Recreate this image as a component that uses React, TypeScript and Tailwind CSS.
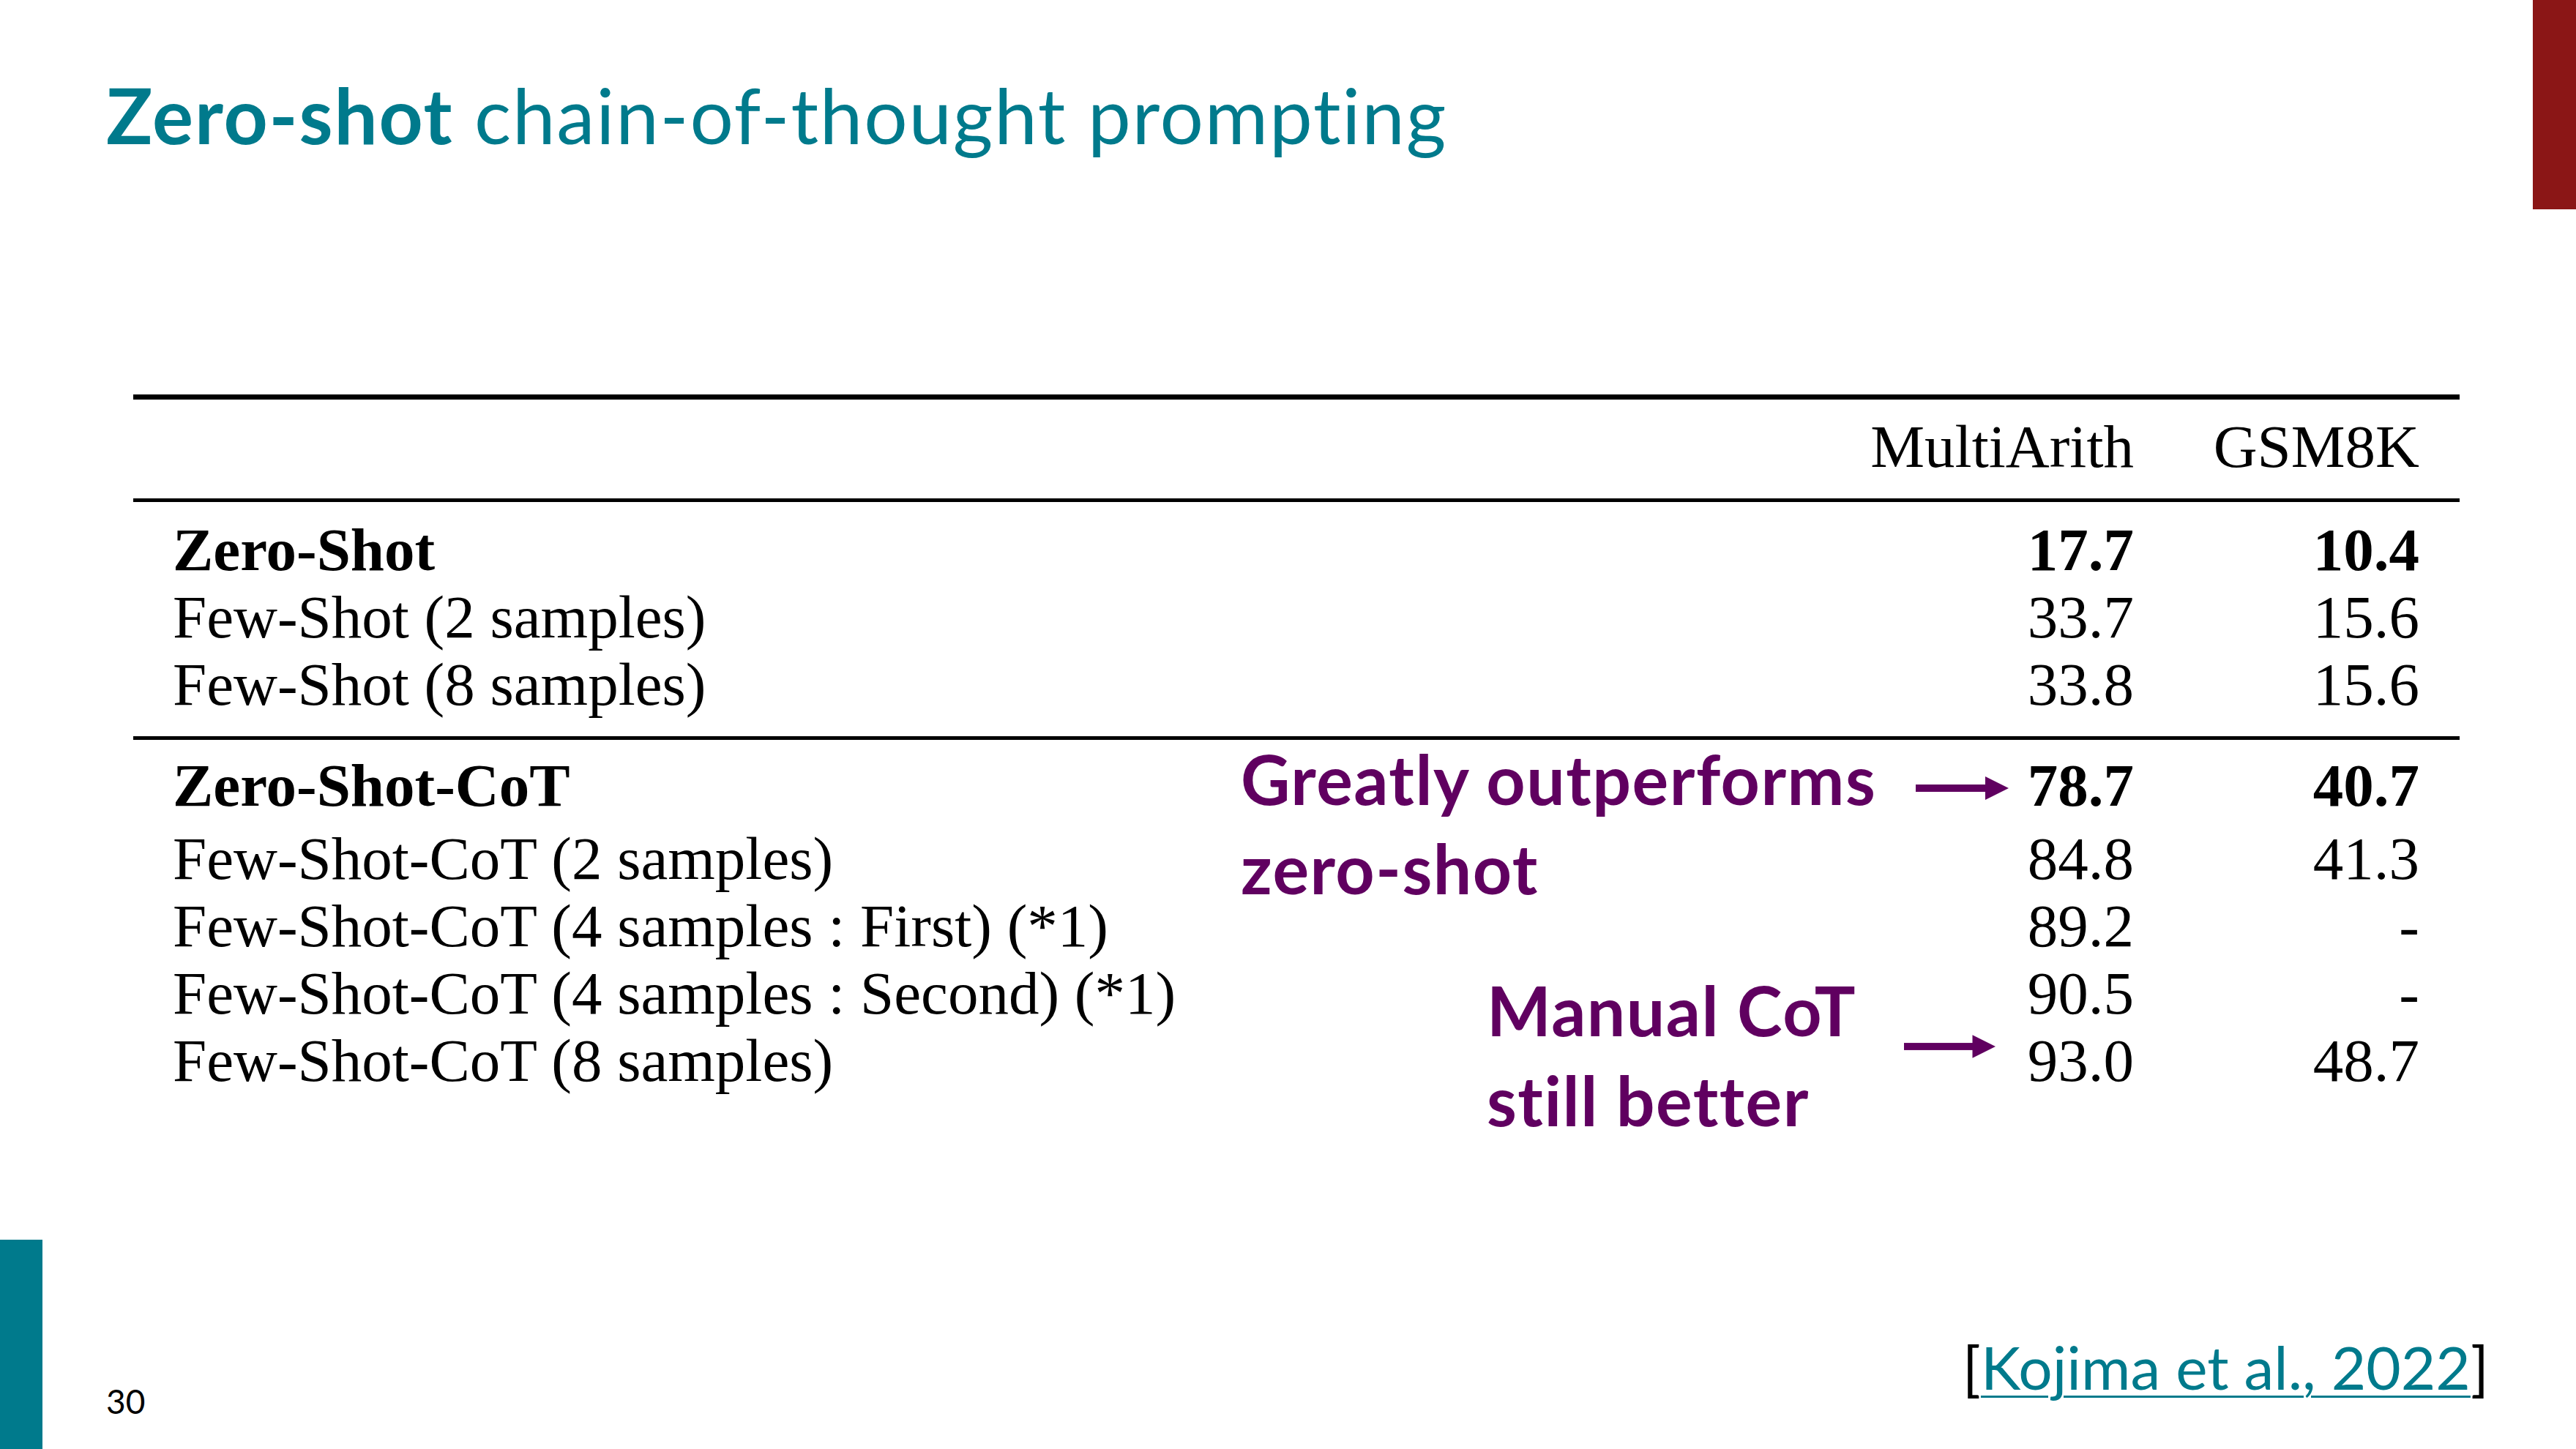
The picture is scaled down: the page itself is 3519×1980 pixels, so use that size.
import React from 'react';

type Row = { label: string; a: string; b: string; bold?: boolean };

const baseRows: Row[] = [
  { label: 'Zero-Shot', a: '17.7', b: '10.4', bold: true },
  { label: 'Few-Shot (2 samples)', a: '33.7', b: '15.6' },
  { label: 'Few-Shot (8 samples)', a: '33.8', b: '15.6' },
];

const cotRows: Row[] = [
  { label: 'Zero-Shot-CoT', a: '78.7', b: '40.7', bold: true },
  { label: 'Few-Shot-CoT (2 samples)', a: '84.8', b: '41.3' },
  { label: 'Few-Shot-CoT (4 samples : First) (*1)', a: '89.2', b: '-' },
  { label: 'Few-Shot-CoT (4 samples : Second) (*1)', a: '90.5', b: '-' },
  { label: 'Few-Shot-CoT (8 samples)', a: '93.0', b: '48.7' },
];

function TableRow({ row, extra = '' }: { row: Row; extra?: string }) {
  const weight = row.bold ? 'font-bold' : 'font-normal';
  return (
    <div className={`flex h-[92px] leading-[92px] pr-[55px] ${extra}`}>
      <div className={`flex-1 pl-[54px] ${weight}`}>{row.label}</div>
      <div className={`w-[400px] text-right ${weight}`}>{row.a}</div>
      <div className={`w-[390px] text-right ${weight}`}>{row.b}</div>
    </div>
  );
}

function Arrow({ className }: { className: string }) {
  return (
    <svg viewBox="0 0 127 32" className={className}>
      <rect x="0" y="11" width="96" height="10" fill="#600060" />
      <polygon points="95,0 127,16 95,32" fill="#600060" />
    </svg>
  );
}

export default function App() {
  return (
    <div className="w-[3519px] h-[1980px] bg-white flex flex-col overflow-hidden [font-variant-ligatures:none]">
      {/* title + red corner bar */}
      <div className="flex h-[286px] shrink-0">
        <h1 className="flex-1 pl-[145px] pt-[104px] font-['Lato',sans-serif] text-[105px] tracking-[0.017em] leading-none text-[#007a8c] font-normal">
          <span className="font-bold">Zero-shot</span> chain-of-thought prompting
        </h1>
        <div className="w-[59px] h-[286px] bg-[#8b1616]" />
      </div>

      {/* results table */}
      <div className="relative ml-[182px] mt-[253px] w-[3178px] font-['Liberation_Serif',serif] text-[83px] text-black">
        <div className="h-[7px] bg-black" />
        <div className="flex h-[135px] pt-[18px] leading-[92px] pr-[55px]">
          <div className="flex-1" />
          <div className="w-[400px] text-right">MultiArith</div>
          <div className="w-[390px] text-right">GSM8K</div>
        </div>
        <div className="h-[5px] bg-black" />
        <div className="pt-[19px] pb-[25px]">
          {baseRows.map((r) => (
            <TableRow key={r.label} row={r} />
          ))}
        </div>
        <div className="h-[5px] bg-black" />
        <div className="pt-[16px]">
          {cotRows.map((r, i) => (
            <TableRow key={r.label} row={r} extra={i === 0 ? 'mb-[8px]' : ''} />
          ))}
        </div>

        {/* callouts */}
        <div className="absolute left-[1513px] top-[464px] font-['Lato',sans-serif] font-bold text-[93px] tracking-[0.016em] leading-[122px] text-[#600060]">
          Greatly outperforms
          <br />
          zero-shot
        </div>
        <Arrow className="absolute left-[2435px] top-[522px] w-[127px] h-[32px]" />
        <div className="absolute left-[1849px] top-[780px] font-['Lato',sans-serif] font-bold text-[93px] tracking-[0.016em] leading-[123px] text-[#600060]">
          Manual CoT
          <br />
          still better
        </div>
        <Arrow className="absolute left-[2419px] top-[875px] w-[125px] h-[32px]" />
      </div>

      {/* footer */}
      <div className="mt-auto flex items-end">
        <div className="w-[58px] h-[286px] bg-[#007a8c] shrink-0" />
        <div className="ml-[87px] mb-[42px] font-['Lato',sans-serif] text-[46px] leading-none text-black">30</div>
        <div className="ml-auto mr-[119px] mb-[72px] font-['Lato',sans-serif] text-[82px] leading-none text-black">
          [<span className="text-[#007a8c] underline decoration-[3px] underline-offset-[8px]">Kojima et al., 2022</span>]
        </div>
      </div>
    </div>
  );
}
